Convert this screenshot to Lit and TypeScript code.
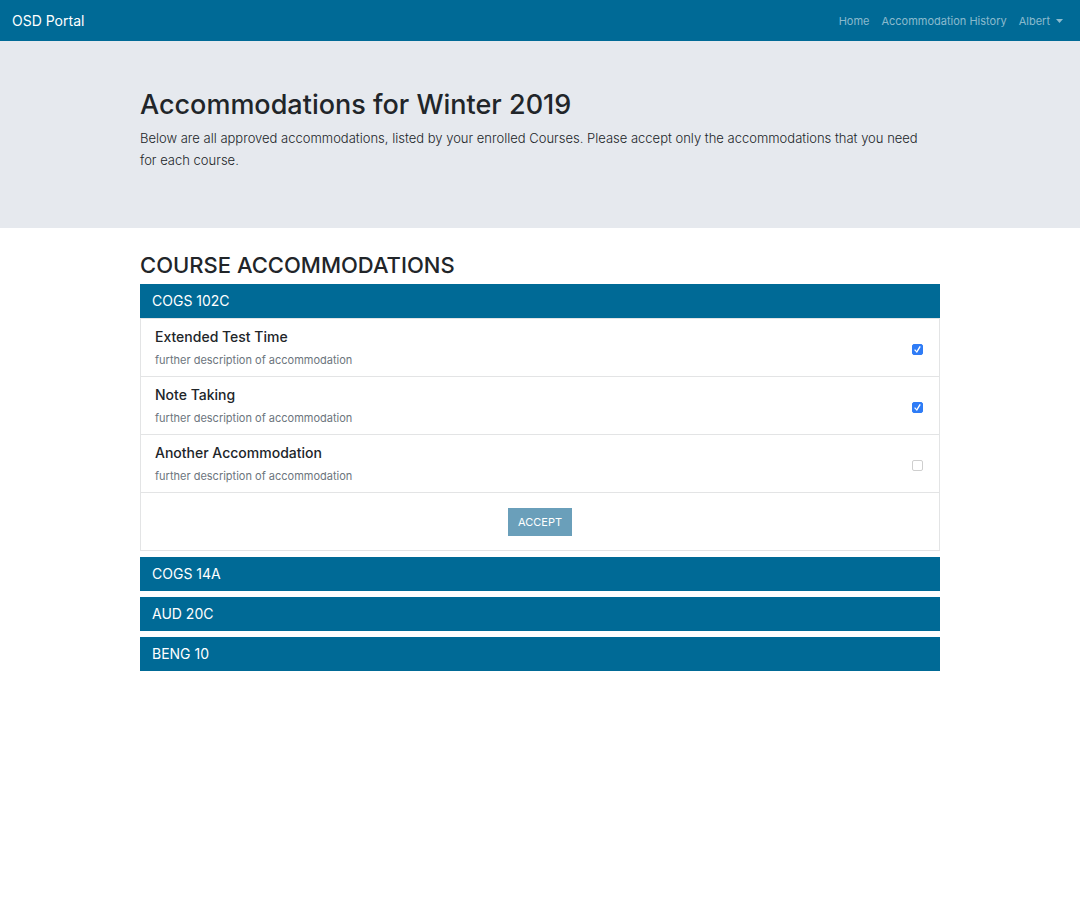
import { LitElement, html, css, nothing } from "lit";
import { customElement, property, state } from "lit/decorators.js";

interface Accommodation {
  name: string;
  description: string;
  accepted: boolean;
}

interface Course {
  code: string;
  accommodations: Accommodation[];
}

const COURSES: Course[] = [
  {
    code: "COGS 102C",
    accommodations: [
      { name: "Extended Test Time", description: "further description of accommodation", accepted: true },
      { name: "Note Taking", description: "further description of accommodation", accepted: true },
      { name: "Another Accommodation", description: "further description of accommodation", accepted: false },
    ],
  },
  { code: "COGS 14A", accommodations: [] },
  { code: "AUD 20C", accommodations: [] },
  { code: "BENG 10", accommodations: [] },
];

@customElement("portal-nav")
export class PortalNav extends LitElement {
  static styles = css`
    :host {
      display: block;
      background: #006a96;
    }
    .bar {
      display: flex;
      flex-wrap: wrap;
      align-items: center;
      justify-content: space-between;
      min-height: 41px;
      padding: 0 17px 0 12px;
      box-sizing: border-box;
    }
    .brand {
      color: #fff;
      font-size: 14px;
      line-height: 21px;
      text-decoration: none;
    }
    .links {
      display: flex;
      align-items: center;
      gap: 12px;
    }
    .link {
      display: inline-flex;
      align-items: center;
      gap: 6px;
      padding: 0;
      border: 0;
      background: none;
      color: rgba(255, 255, 255, 0.55);
      font-family: inherit;
      font-size: 11px;
      line-height: 18px;
      text-decoration: none;
      cursor: pointer;
    }
    .link:hover {
      color: rgba(255, 255, 255, 0.75);
    }
    .caret {
      width: 7px;
      height: 4px;
      fill: currentColor;
    }
  `;

  render() {
    return html`
      <nav class="bar">
        <a class="brand" href="#">OSD Portal</a>
        <div class="links">
          <a class="link" href="#home">Home</a>
          <a class="link" href="#history">Accommodation History</a>
          <button class="link" type="button" aria-haspopup="true">
            Albert
            <svg class="caret" viewBox="0 0 7 4" aria-hidden="true"><path d="M0 0h7L3.5 4z" /></svg>
          </button>
        </div>
      </nav>
    `;
  }
}

@customElement("course-card")
export class CourseCard extends LitElement {
  @property({ attribute: false }) course!: Course;
  @property({ type: Boolean }) open = false;

  static styles = css`
    :host {
      display: block;
    }
    .title {
      margin: 0;
      font-size: inherit;
      font-weight: inherit;
    }
    .toggle {
      display: block;
      width: 100%;
      padding: 8px 12px;
      border: 0;
      background: #006a96;
      color: #fff;
      font-family: inherit;
      font-size: 14px;
      line-height: 18px;
      text-align: left;
      cursor: pointer;
    }
    .panel {
      border: 1px solid #e3e4e5;
    }
    .list {
      margin: 0;
      padding: 0;
      list-style: none;
    }
    .item {
      display: flex;
      align-items: center;
      justify-content: space-between;
      padding: 8px 16px 8px 14px;
      border-bottom: 1px solid #e3e4e5;
    }
    .name {
      display: block;
      color: #212529;
      font-size: 14px;
      font-weight: 500;
      line-height: 20px;
    }
    .description {
      display: block;
      margin-top: 5px;
      color: #6c757d;
      font-size: 11px;
      line-height: 16px;
    }
    .check {
      appearance: none;
      display: grid;
      place-content: center;
      width: 11px;
      height: 11px;
      margin: 4px 0 0;
      border: 1px solid #cfcfcf;
      border-radius: 2px;
      background: #fff;
    }
    .check:checked {
      border-color: #2f7cf6;
      background: #2f7cf6;
    }
    .check:checked::before {
      content: "";
      width: 7px;
      height: 7px;
      background: #fff;
      clip-path: polygon(2% 58%, 16% 46%, 37% 70%, 80% 0%, 97% 10%, 42% 100%);
    }
    .footer {
      display: flex;
      justify-content: center;
      padding: 15px 14px 14px;
    }
    .accept {
      padding: 5px 10px;
      border: 0;
      background: #6a9fba;
      color: #fff;
      font-family: inherit;
      font-size: 11px;
      line-height: 18px;
      cursor: pointer;
    }
  `;

  private toggle() {
    this.open = !this.open;
  }

  render() {
    const { code, accommodations } = this.course;
    return html`
      <h3 class="title">
        <button class="toggle" type="button" aria-expanded=${this.open ? "true" : "false"} @click=${this.toggle}>
          ${code}
        </button>
      </h3>
      ${this.open && accommodations.length
        ? html`
            <div class="panel">
              <ul class="list">
                ${accommodations.map(
                  (a, i) => html`
                    <li class="item">
                      <label for="accommodation-${i}">
                        <span class="name">${a.name}</span>
                        <span class="description">${a.description}</span>
                      </label>
                      <input class="check" id="accommodation-${i}" type="checkbox" ?checked=${a.accepted} />
                    </li>
                  `
                )}
              </ul>
              <div class="footer"><button class="accept" type="button">ACCEPT</button></div>
            </div>
          `
        : nothing}
    `;
  }
}

@customElement("app-root")
export class AppRoot extends LitElement {
  @state() private courses = COURSES;

  static styles = css`
    :host {
      display: block;
      min-height: 100vh;
      background: #fff;
      color: #212529;
      font-family: Inter, "Liberation Sans", sans-serif;
    }
    .hero {
      padding: 47px 0 57px;
      background: #e6e9ee;
    }
    .container {
      box-sizing: border-box;
      max-width: 824px;
      margin: 0 auto;
      padding: 0 12px;
    }
    .heading {
      margin: 0 0 5px;
      font-size: 27px;
      font-weight: 500;
      line-height: 34px;
    }
    .lead {
      margin: 0;
      padding-right: 12px;
      font-size: 13px;
      font-weight: 300;
      line-height: 22px;
    }
    .section {
      padding-top: 23px;
      padding-bottom: 24px;
    }
    .subheading {
      margin: 0 0 5px;
      font-size: 22px;
      font-weight: 500;
      line-height: 28px;
    }
    .courses {
      display: grid;
      gap: 6px;
    }
  `;

  render() {
    return html`
      <portal-nav></portal-nav>
      <header class="hero">
        <div class="container">
          <h1 class="heading">Accommodations for Winter 2019</h1>
          <p class="lead">
            Below are all approved accommodations, listed by your enrolled Courses. Please accept only the
            accommodations that you need for each course.
          </p>
        </div>
      </header>
      <main class="container section">
        <h2 class="subheading">COURSE ACCOMMODATIONS</h2>
        <div class="courses">
          ${this.courses.map((course, i) => html`<course-card .course=${course} ?open=${i === 0}></course-card>`)}
        </div>
      </main>
    `;
  }
}
